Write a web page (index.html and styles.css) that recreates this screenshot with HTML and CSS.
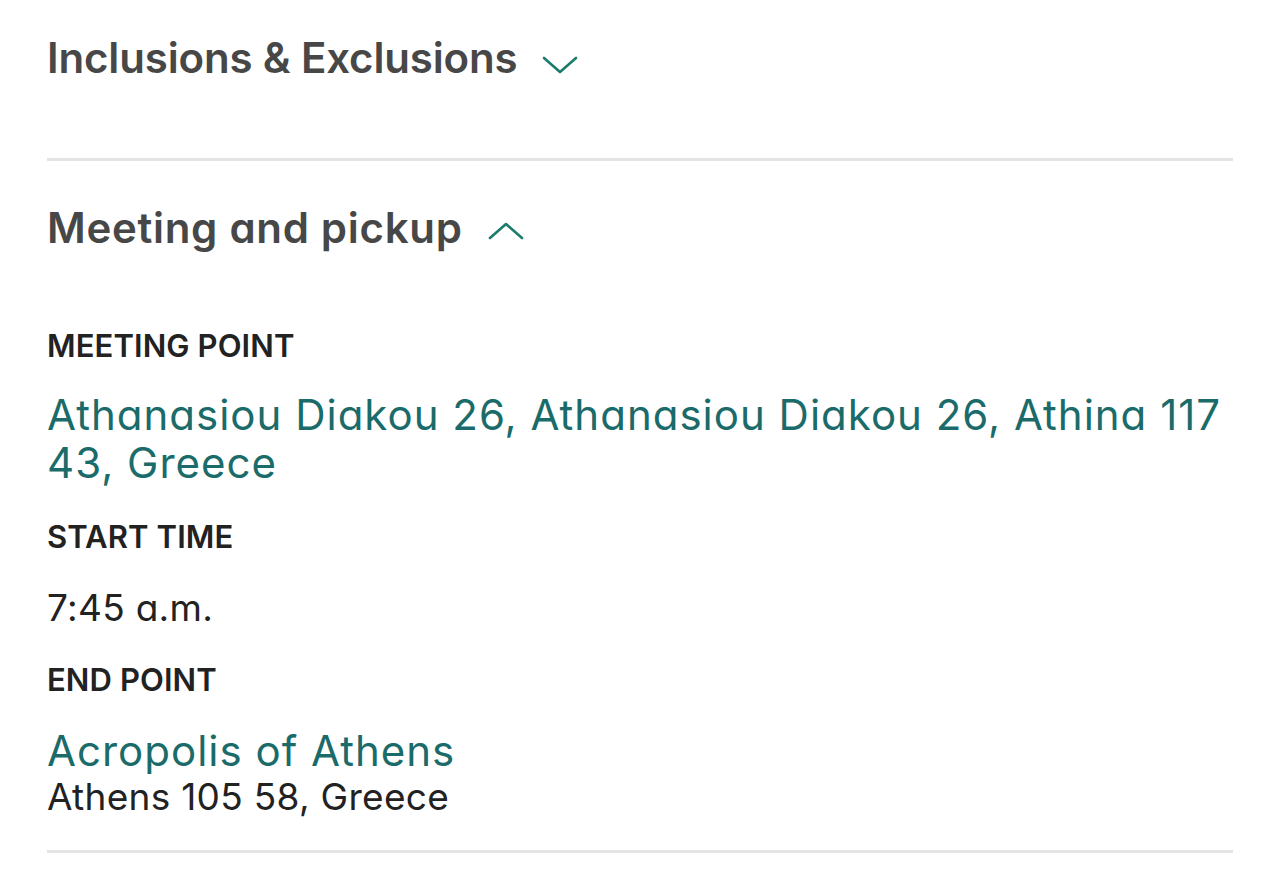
FILE: index.html
```html
<!DOCTYPE html>
<html lang="en">
<head>
<meta charset="utf-8">
<title>Meeting and pickup</title>
<link rel="stylesheet" href="styles.css">
</head>
<body>
<main class="page">
  <section class="acc">
    <h2 class="acc-head">
      <span class="acc-title">Inclusions &amp; Exclusions</span>
      <svg class="chev" width="36" height="18" viewBox="0 0 36 18" aria-hidden="true"><path d="M2 2 L18 16 L34 2" fill="none" stroke="#1b7b6c" stroke-width="2.6" stroke-linecap="round" stroke-linejoin="round"/></svg>
    </h2>
  </section>
  <section class="acc open">
    <h2 class="acc-head">
      <span class="acc-title">Meeting and pickup</span>
      <svg class="chev" width="36" height="18" viewBox="0 0 36 18" aria-hidden="true"><path d="M2 16 L18 2 L34 16" fill="none" stroke="#1b7b6c" stroke-width="2.6" stroke-linecap="round" stroke-linejoin="round"/></svg>
    </h2>
    <div class="acc-body">
      <h3 class="label">MEETING POINT</h3>
      <a class="place" href="#">Athanasiou Diakou 26, Athanasiou Diakou 26, Athina 117 43, Greece</a>
      <h3 class="label">START TIME</h3>
      <p class="text">7:45 a.m.</p>
      <h3 class="label">END POINT</h3>
      <div class="endpoint">
        <a class="place" href="#">Acropolis of Athens</a>
        <p class="text">Athens 105 58, Greece</p>
      </div>
    </div>
  </section>
</main>
</body>
</html>
```
FILE: styles.css
```css
html, body {
  margin: 0;
  padding: 0;
  background: #ffffff;
}
body {
  font-family: Inter, "Noto Sans", "Liberation Sans", sans-serif;
  font-feature-settings: "cv11" 1;
  -webkit-font-smoothing: antialiased;
}
.page {
  padding: 33px 47px 0 47px;
}
.acc {
  border-bottom: 3px solid #e4e4e4;
  padding-bottom: 75px;
}
.acc.open {
  padding-top: 42px;
  padding-bottom: 31px;
}
.acc-head {
  margin: 0;
  display: flex;
  align-items: center;
  gap: 25px;
  font-size: 42px;
  line-height: 50px;
  font-weight: 600;
  color: #474747;
  letter-spacing: -0.15px;
}
.acc.open .acc-head {
  letter-spacing: 0.7px;
}
.chev {
  display: block;
  flex: none;
  margin-top: 14px;
}
.acc.open .chev {
  margin-top: 6px;
}
.acc-body {
  display: flex;
  flex-direction: column;
  padding-top: 75px;
}
.label {
  margin: 0;
  font-size: 31px;
  line-height: 36px;
  font-weight: 600;
  color: #222222;
  letter-spacing: 0.1px;
}
.place {
  display: block;
  font-size: 42px;
  line-height: 48px;
  font-weight: 400;
  color: #1a6b69;
  text-decoration: none;
  letter-spacing: 1px;
}
.acc-body > .place {
  margin: 27px 0 32px;
}
.text {
  margin: 0;
  font-size: 37px;
  line-height: 44px;
  font-weight: 400;
  color: #222222;
  letter-spacing: 0.3px;
}
.acc-body > .text {
  margin: 31px 0 32px;
}
.endpoint {
  margin-top: 29px;
}
```
